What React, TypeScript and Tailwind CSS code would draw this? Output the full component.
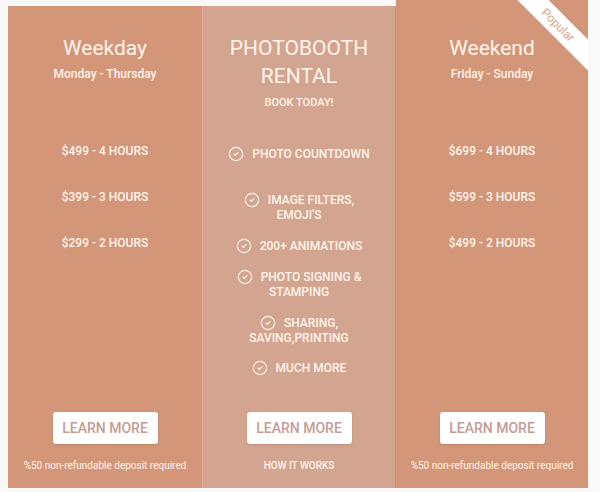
import { CircleCheck } from "lucide-react";

const WEEKDAY = ["$499 - 4 HOURS", "$399 - 3 HOURS", "$299 - 2 HOURS"];
const WEEKEND = ["$699 - 4 HOURS", "$599 - 3 HOURS", "$499 - 2 HOURS"];

const FEATURES: { lines: string[]; className: string }[] = [
  { lines: ["PHOTO COUNTDOWN"], className: "mt-[37px]" },
  { lines: ["IMAGE FILTERS,", "EMOJI'S"], className: "mt-[31px]" },
  { lines: ["200+ ANIMATIONS"], className: "mt-[16px]" },
  { lines: ["PHOTO SIGNING &", "STAMPING"], className: "mt-[16px]" },
  { lines: ["SHARING,", "SAVING,PRINTING"], className: "mt-[16px]" },
  { lines: ["MUCH MORE"], className: "mt-[15px]" },
];

function LearnMore() {
  return (
    <button className="h-8 w-[105px] rounded-[3px] bg-white text-[14px] font-medium text-[#c49c95] shadow-sm">
      LEARN MORE
    </button>
  );
}

function PriceCard({
  title,
  days,
  prices,
  popular,
}: {
  title: string;
  days: string;
  prices: string[];
  popular?: boolean;
}) {
  return (
    <div
      className={`relative flex flex-col items-center overflow-hidden bg-[#d49679] text-[#fff4ea] ${
        popular ? "h-[488px] w-[192px] pt-[34px]" : "h-[482px] w-[194px] pt-[28px]"
      }`}
    >
      {popular && (
        <div className="absolute left-[100px] top-[14px] flex h-[22px] w-[124px] rotate-45 items-center justify-center bg-white text-[12px] text-[#dba588]">
          Popular
        </div>
      )}
      <h2 className="text-[21px] leading-[28px]">{title}</h2>
      <p className="mt-[4px] text-[12px] font-medium leading-4">{days}</p>
      <div className="mt-[61px] flex flex-col gap-[30px]">
        {prices.map((price) => (
          <p key={price} className="text-center text-[12px] font-medium leading-4">
            {price}
          </p>
        ))}
      </div>
      <div className="mt-auto flex flex-col items-center pb-[15px]">
        <LearnMore />
        <p className="mt-[15px] text-[10px] leading-[14px]">%50 non-refundable deposit required</p>
      </div>
    </div>
  );
}

export default function App() {
  return (
    <div
      className="flex h-[492px] w-[600px] bg-[#f9f9fa] pl-2"
      style={{ fontFamily: "Roboto, 'Noto Sans', sans-serif" }}
    >
      <div className="flex items-end pb-1">
        <PriceCard title="Weekday" days="Monday - Thursday" prices={WEEKDAY} />
        <div className="flex h-[482px] w-[194px] flex-col items-center border-l border-l-[#dcae9a] border-r border-r-[#c98d72] bg-[#d3a591] pt-[28px] text-[#fff4ea]">
          <h2 className="text-center text-[21px] leading-[28px]">
            PHOTOBOOTH
            <br />
            RENTAL
          </h2>
          <p className="mt-[6px] text-[11px] font-medium leading-[14px]">BOOK TODAY!</p>
          {FEATURES.map((feature) => (
            <p
              key={feature.lines[0]}
              className={`text-center text-[12px] font-medium leading-[15px] ${feature.className}`}
            >
              <CircleCheck
                className="-my-[3px] mr-[8px] inline-block h-[16px] w-[16px] -translate-y-px align-middle"
                strokeWidth={1.7}
              />
              {feature.lines[0]}
              {feature.lines[1] && (
                <>
                  <br />
                  {feature.lines[1]}
                </>
              )}
            </p>
          ))}
          <div className="mt-auto flex flex-col items-center pb-[15px]">
            <LearnMore />
            <p className="mt-[15px] text-[10px] font-medium leading-[14px]">HOW IT WORKS</p>
          </div>
        </div>
        <PriceCard title="Weekend" days="Friday - Sunday" prices={WEEKEND} popular />
      </div>
    </div>
  );
}
